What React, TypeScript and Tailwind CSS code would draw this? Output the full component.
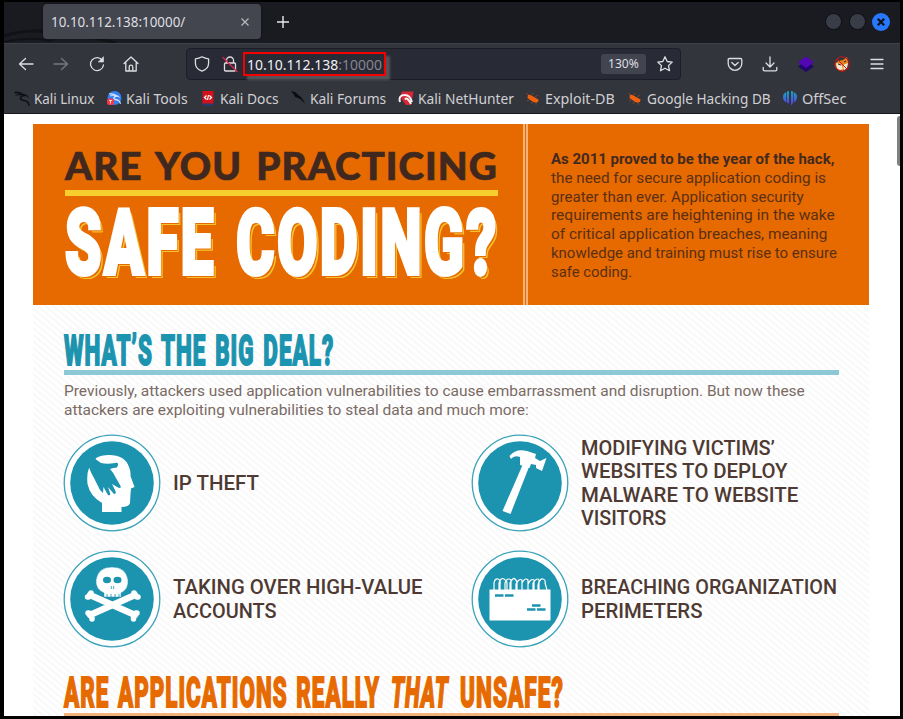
import { useLayoutEffect, useRef, useState, type ReactNode } from "react";

/** One line of lettering, condensed or widened to fill its box. */
function Fit({ className, children }: { className: string; children: ReactNode }) {
  const box = useRef<HTMLDivElement>(null);
  const text = useRef<HTMLSpanElement>(null);
  const [scale, setScale] = useState(1);
  useLayoutEffect(() => {
    if (box.current && text.current) {
      setScale(box.current.clientWidth / text.current.offsetWidth);
    }
  }, []);
  return (
    <div ref={box} className={"shrink-0 whitespace-nowrap " + className}>
      <span ref={text} className="inline-block origin-left" style={{ transform: `scaleX(${scale})` }}>
        {children}
      </span>
    </div>
  );
}

function Stroke({ children, className = "" }: { children: ReactNode; className?: string }) {
  return (
    <svg viewBox="0 0 16 16" fill="none" stroke="#dedee1" strokeWidth="1.3" strokeLinecap="round" strokeLinejoin="round" className={"size-4 shrink-0 " + className}>
      {children}
    </svg>
  );
}

function TabStrip() {
  return (
    <div className="relative flex h-[41px] shrink-0 items-start bg-[#191b20]">
      <svg className="absolute left-0 top-0 h-[41px] w-[220px]" viewBox="0 0 220 41" fill="none" stroke="#101217">
        <path d="M0 34Q22 27 42 30Q85 33 112 41" strokeWidth="3" />
        <path d="M0 40Q25 34 48 39" strokeWidth="2" />
      </svg>
      <div className="relative ml-[39px] mt-[2px] flex h-[35px] w-[218px] items-center rounded-[4px] bg-[#44464f] pl-[8px] shadow-[0_0_2px_#0c0d10]">
        <Fit className="w-[134px] text-[14px] leading-[20px] text-[#dedee2]">10.10.112.138:10000/</Fit>
        <svg viewBox="0 0 8 8" className="ml-[56px] size-2" stroke="#b9babd" strokeWidth="1.2">
          <path d="M.5.5l7 7m0-7l-7 7" />
        </svg>
      </div>
      <svg viewBox="0 0 12 12" className="relative ml-[15.5px] mt-[14px] size-3" stroke="#e8e8ea" strokeWidth="1.4">
        <path d="M6 0v12M0 6h12" />
      </svg>
      <div className="ml-auto mr-[10px] mt-[11px] flex gap-[6.5px]">
        <span className="size-[17px] rounded-full border border-[#0b0d11] bg-[#383d48]" />
        <span className="size-[17px] rounded-full border border-[#0b0d11] bg-[#383d48]" />
        <svg viewBox="0 0 18 18" className="size-[18px]">
          <circle cx="9" cy="9" r="9" fill="#2777ff" />
          <path d="M5.8 5.800l6.400 6.400m0-6.400l-6.400 6.400" stroke="#10131c" strokeWidth="2.300" />
        </svg>
      </div>
    </div>
  );
}

function AddressBar() {
  return (
    <div className="flex h-[32px] w-[495px] items-center rounded-[4px] border border-[#1c1d25] bg-[#282a36]">
      <Stroke className="ml-[7px]">
        <path d="M8 .8Q11 2.600 14.600 2.900V7c0 4-2.600 6.800-6.600 8.200C4 13.800 1.400 11 1.400 7V2.900Q5 2.600 8 .8z" />
      </Stroke>
      <Stroke className="ml-[12px]">
        <path d="M4.500 7V4.500a3.500 3.500 0 0 1 7 0V7M3.500 7h9q1 0 1 1v6q0 1-1 1h-9q-1 0-1-1V8q0-1 1-1z" />
        <path d="M1 1.500l14 14" stroke="#e2254e" />
      </Stroke>
      <div className="ml-[5px] flex h-[24px] w-[143px] items-center border-2 border-[#f50000] pl-[2px] shadow-[4px_4px_2px_#53545a]">
        <Fit className="w-[135px] text-[14.500px] leading-[20px] text-[#f0f0f2]">
          10.10.112.138<span className="text-[#85868e]">:10000</span>
        </Fit>
      </div>
      <div className="ml-auto flex h-[20px] w-[45px] items-center justify-center rounded-[3px] bg-[#42444f]">
        <Fit className="w-[31px] text-[12.500px] leading-[18px] text-[#dedee1]">130%</Fit>
      </div>
      <Stroke className="ml-[11px] mr-[7px]">
        <path d="M8 .8l2.200 4.700 5 .6-3.700 3.500 1 5.100L8 12.200l-4.500 2.500 1-5.100L.8 6.100l5-.6z" />
      </Stroke>
    </div>
  );
}

function Toolbar() {
  return (
    <div className="flex h-[40px] shrink-0 items-center border-t border-[#3f4148] bg-[#33353d] pl-[14px]">
      <Stroke><path d="M15 8H1.500m6-5.500L1.500 8l6 5.500" /></Stroke>
      <Stroke className="ml-[19px] opacity-40"><path d="M1 8h13.500m-6-5.500l6 5.500-6 5.500" /></Stroke>
      <Stroke className="ml-[20px]">
        <path d="M13.500 4.500A6.500 6.500 0 1 0 14.500 9" />
        <path d="M14.500 1v5H9.500z" fill="#dedee1" strokeWidth=".6" />
      </Stroke>
      <Stroke className="ml-[18px] mr-[47px]">
        <path d="M1 7.500L8 1l7 6.500M2.800 6.500V15h10.400V6.500M6.200 15v-4a1.800 1.800 0 0 1 3.600 0v4" />
      </Stroke>
      <AddressBar />
      <Stroke className="ml-[46px]">
        <path d="M2.500 2.500h11q1.300 0 1.300 1.300V7.500a6.800 6.800 0 0 1-13.600 0V3.800q0-1.300 1.300-1.300zM4.800 6.500L8 9.500l3.200-3" />
      </Stroke>
      <Stroke className="ml-[19px]">
        <path d="M8 .8v10M4 7l4 4 4-4M1.200 11.500v2q0 1.300 1.300 1.300h11q1.300 0 1.300-1.300v-2" />
      </Stroke>
      <svg viewBox="0 0 16 16" className="ml-[20px] size-4">
        <path d="M0 10.500L8 5l8 5.500L8 16z" fill="#22056d" />
        <path d="M0 6.300L8 .5l8 5.800-8 5.700z" fill="#5206b4" />
      </svg>
      <svg viewBox="0 0 16 16" className="ml-[20px] size-4">
        <path d="M1 8l3-3 5-1 4-3 1 5-1 5-4 4-5-1-2-3z" fill="#e98020" />
        <path d="M2 7l5 1 2 5-3 1-3-2zM9 9l5-2-1 5-3 2z" fill="#eee7d8" />
        <path d="M4 8l3 1m3-3l2-1" stroke="#35261b" />
        <circle cx="8" cy="8" r="7.200" fill="none" stroke="#ca1616" />
        <path d="M3 3l10 10" stroke="#ca1616" />
      </svg>
      <Stroke className="ml-[19px]"><path d="M2 3.500h12M2 8h12M2 12.500h12" strokeWidth="1.300" /></Stroke>
    </div>
  );
}

const Dragon = ({ color = "#101115" }: { color?: string }) => (
  <g fill="none" stroke={color} strokeLinecap="round">
    <path d="M1 2.500Q6 2 10.500 5.500Q6 6 6.500 9Q8.500 10.500 12 11Q14.500 12 15 15" strokeWidth="1.700" />
    <path d="M2 5Q5 4.200 8 5M10 5q2-.5 4 2" strokeWidth="1.200" />
  </g>
);
const Bug = () => (
  <g>
    <path d="M3 4.500Q6 4.500 9 7l4.500 2.500L13 12Q9 13.500 6 10.500L2.500 8z" fill="#f0600f" />
    <path d="M4 10l-2 1m5 1l-1 2m5-1v2M7 5l1-2m2 4l3-2M3 5L1.500 3" stroke="#8b471f" strokeWidth=".8" />
  </g>
);

const bookmarks = [
  { label: "Kali Linux", box: "w-[92px]", text: "w-[60px]", icon: <Dragon /> },
  {
    label: "Kali Tools", box: "w-[94px]", text: "w-[62px]",
    icon: (
      <>
        <circle cx="8.500" cy="8" r="7" fill="#367ff0" />
        <g transform="translate(3 2) scale(.75)"><Dragon color="#d6e7ff" /></g>
        <rect x="1" y="8.500" width="7" height="6.500" rx="2" fill="#ef3c49" />
        <path d="M3 10.500h3M4.500 10.500v3" stroke="#fbd0d4" />
      </>
    ),
  },
  {
    label: "Kali Docs", box: "w-[90px]", text: "w-[59px]",
    icon: (
      <>
        <path d="M2.500 1h11v14h-11z" fill="#d41119" />
        <path d="M2.500 13.500h11V15.500h-11z" fill="#223c78" />
        <path d="M6.500 5.500L4.500 7.500l2 2M9.500 5.500l2 2-2 2M8.500 5l-1 5" stroke="#fff" strokeWidth="1.200" fill="none" />
      </>
    ),
  },
  {
    label: "Kali Forums", box: "w-[108px]", text: "w-[76px]",
    icon: <path d="M.5 1L5 2l4 3.500q3.500 2 6 8.500-4-5-7-6L5 7 3.500 4z" fill="#0c0d10" />,
  },
  {
    label: "Kali NetHunter", box: "w-[127px]", text: "w-[96px]",
    icon: (
      <>
        <path d="M4 1.500h11.500L13 15H8L2 7z" fill="#d92638" />
        <path d="M2 12Q0 5 7 5q5 0 7 7M7 9.500q1-2 3 0t3 4.500" stroke="#f4f4f4" strokeWidth="2" fill="none" />
      </>
    ),
  },
  { label: "Exploit-DB", box: "w-[102px]", text: "w-[70px]", icon: <Bug /> },
  { label: "Google Hacking DB", box: "w-[155px]", text: "w-[124px]", icon: <Bug /> },
  {
    label: "OffSec", box: "w-[70px]", text: "w-[44px]",
    icon: (
      <>
        <defs>
          <linearGradient id="offsec" x1="0" y1="0" x2="0" y2="1">
            <stop offset="0" stopColor="#13a9c5" />
            <stop offset="1" stopColor="#6136e8" />
          </linearGradient>
        </defs>
        <path d="M7 1v12.500L5 12.800V1.500zM9 1v14.500l2-2.500V1.500zM4.300 2v10.500Q1 10.500 1 7t3.300-5zM11.700 2v10.500Q15 10.500 15 7t-3.300-5z" fill="url(#offsec)" />
      </>
    ),
  },
];

function Bookmarks() {
  return (
    <div className="flex h-[31px] shrink-0 items-center border-b border-[#18191c] bg-[#33353d] pl-[10px]">
      {bookmarks.map((b) => (
        <div key={b.label} className={"flex shrink-0 items-center gap-1 " + b.box}>
          <svg viewBox="0 0 16 16" className="size-4 shrink-0">{b.icon}</svg>
          <Fit className={"-mt-px text-[14.500px] leading-[20px] text-[#d0d0d3] " + b.text}>{b.label}</Fit>
        </div>
      ))}
    </div>
  );
}

function Banner() {
  return (
    <div className="flex h-[181px] w-[836px] bg-[#e66a00] text-[#5a2f14]">
      <div className="w-[490px] pl-[31px] pt-[21px]">
        <Fit className="ml-px h-[45px] w-[433px] font-['Lato'] text-[38.500px] font-black leading-[41px] tracking-[1px] text-[#40281f] [-webkit-text-stroke:.7px_#40281f] [word-spacing:4px]">
          ARE YOU PRACTICING
        </Fit>
        <div className="ml-px h-[6px] w-[433px] bg-[#f6cf2f]" />
        <Fit className="mt-[2px] ml-px h-[90px] w-[434px] font-['Roboto'] text-[91px] font-black leading-[90px] tracking-[4px] text-white [-webkit-text-stroke:4px_white] [text-shadow:3px_3px_0_#e66a00,4px_4px_0_#f6c32b,5px_4px_0_#f6c32b] [word-spacing:5px]">
          SAFE CODING?
        </Fit>
      </div>
      <div className="h-full w-[5px] border-x-2 border-[#f4b27a]" />
      <div className="pl-[23px] pt-[27px] font-['Roboto'] text-[14.500px] leading-[18.750px]">
        <Fit className="w-[283px] font-bold text-[#44291f]">As 2011 proved to be the year of the hack,</Fit>
        <Fit className="w-[275px]">the need for secure application coding is</Fit>
        <Fit className="w-[253px]">greater than ever. Application security</Fit>
        <Fit className="w-[284px]">requirements are heightening in the wake</Fit>
        <Fit className="w-[276px]">of critical application breaches, meaning</Fit>
        <Fit className="w-[286px]">knowledge and training must rise to ensure</Fit>
        <Fit className="w-[81px]">safe coding.</Fit>
      </div>
    </div>
  );
}

function Badge({ children }: { children: ReactNode }) {
  return (
    <svg viewBox="0 0 98 98" className="size-[98px] shrink-0">
      <circle cx="49" cy="49" r="47.800" fill="#fff" stroke="#3ca3ba" strokeWidth="1.300" />
      <circle cx="49" cy="49" r="41.800" fill="#1c93af" />
      {children}
    </svg>
  );
}

const HeadIcon = () => (
  <Badge>
    <path d="M33 24Q38 21 46 21Q62 21 66 33Q68 38 67.500 42L71.500 53L68 54.500L67.500 60L67 69Q66 73 58.500 73V78H39V69Q27 62 24.500 50Q23.500 40 26 34Z" fill="#fff" />
    <path d="M22 34L26 33.500Q28 39 31 44L37 56L40 59L40.500 53L45 61Q48 62 47 59L45 53L51 60Q54 60 52 56L49 50L56 54Q59 54 57 51L53 44Q50 38 47 35Q50 33.500 54 33.500Q57 28 52 29Q44 30.500 38 29L33 25.500L31 22Z" fill="#1c93af" />
  </Badge>
);
const SkullIcon = () => (
  <Badge>
    <g stroke="#fff" strokeWidth="6.500" strokeLinecap="round">
      <path d="M27 45L72 65M72 45L27 65" />
      <path d="M28 43v1M24.500 47h1M71 43v1M74 47h1M26 63h-1M29 68v1M73 63h1M70.500 68v1" strokeWidth="5.500" />
    </g>
    <path d="M41 47V43Q32 39 33 30Q35 17 49 17T65 30Q66 39 58 43V47Z" fill="#fff" stroke="#1c93af" strokeWidth=".5" />
    <ellipse cx="44" cy="30" rx="4" ry="3.200" fill="#1c93af" />
    <ellipse cx="54.500" cy="30" rx="4" ry="3.200" fill="#1c93af" />
    <path d="M48.300 36v3m2.400-3v3M44 44v3m4-3v3m4-3v3m4-3v3" stroke="#1c93af" strokeWidth=".8" />
  </Badge>
);
const HammerIcon = () => (
  <Badge>
    <path d="M52 30L58 33L39.500 80L31.500 77Z" fill="#fff" />
    <path d="M38.500 22Q45 14 56 17L65 20L64 24L69 27L75.500 24L71 37L65 34V31L60 30L58.500 34L49 31V23Q43 21 40 25Z" fill="#fff" />
  </Badge>
);
const FenceIcon = () => (
  <Badge>
    <path d="M18.500 39.500h61v31h-61z" fill="#fff" />
    <path d="M23 40V33q1-5 4-4t2 5v6M28 40v-7q2-6 5-4t3 4v7M34 40v-7q2-6 6-3v10M39 40v-7q3-6 5-4t2 4v7M45 40v-6q3-6 6-4v10M51 40v-7q3-6 6-3v10M57 40v-6q3-6 6-4v10M62 40v-7q4-6 6-3v10M67 40v-5q2-7 5-6t2 4l2 7" fill="none" stroke="#fff" strokeWidth="1.200" />
    <path d="M24 45.500h8.500M34 45.500h8.500M61 55.500h8.500M56 59.500h8.500M66 59.500h8.500" stroke="#1c93af" strokeWidth="2.500" />
  </Badge>
);

function Threats() {
  const label = "flex flex-col pl-[11.500px] pt-[2px] font-['Roboto'] text-[19.500px] font-medium leading-[23.200px] text-[#4e3a32]";
  return (
    <div className="-ml-px mt-[13px] grid grid-cols-[408px_1fr] gap-y-[18px]">
      <div className="flex h-[98px] items-center">
        <HeadIcon />
        <div className={label}><Fit className="w-[86px]">IP THEFT</Fit></div>
      </div>
      <div className="flex h-[98px] items-center">
        <HammerIcon />
        <div className={label}>
          <Fit className="w-[194px]">MODIFYING VICTIMS’</Fit>
          <Fit className="w-[207px]">WEBSITES TO DEPLOY</Fit>
          <Fit className="w-[217px]">MALWARE TO WEBSITE</Fit>
          <Fit className="w-[85px]">VISITORS</Fit>
        </div>
      </div>
      <div className="flex h-[98px] items-center">
        <SkullIcon />
        <div className={label}>
          <Fit className="w-[249px]">TAKING OVER HIGH-VALUE</Fit>
          <Fit className="w-[104px]">ACCOUNTS</Fit>
        </div>
      </div>
      <div className="flex h-[98px] items-center">
        <FenceIcon />
        <div className={label}>
          <Fit className="w-[256px]">BREACHING ORGANIZATION</Fit>
          <Fit className="w-[122px]">PERIMETERS</Fit>
        </div>
      </div>
    </div>
  );
}

function Article() {
  return (
    <div className="flex-1 bg-[repeating-linear-gradient(40deg,#f9f9f9_0px,#f9f9f9_1.500px,#ffffff_2.500px,#ffffff_4.500px,#f9f9f9_5px)] pl-[31px] pt-[22px]">
      <Fit className="h-[43px] w-[270px] font-['Roboto'] text-[43px] font-extrabold leading-[46px] tracking-[2px] text-[#1c93af] [-webkit-text-stroke:2px_#1c93af] [word-spacing:4px]">
        WHAT’S THE BIG DEAL?
      </Fit>
      <div className="h-[5px] w-[775px] bg-[#8cc8d6]" />
      <div className="mt-[8px] font-['Roboto'] text-[14.500px] leading-[18.750px] text-[#7a6a64]">
        <Fit className="w-[741px]">
          Previously, attackers used application vulnerabilities to cause embarrassment and disruption. But now these
        </Fit>
        <Fit className="w-[465px]">attackers are exploiting vulnerabilities to steal data and much more:</Fit>
      </div>
      <Threats />
      <div className="mt-[21px] flex h-[44px] font-['Roboto'] text-[43px] font-extrabold leading-[46px] tracking-[2px] text-[#e66a00] [-webkit-text-stroke:2px_#e66a00] [word-spacing:4px]">
        <Fit className="w-[316px]">ARE APPLICATIONS REALLY</Fit>
        <Fit className="ml-[11px] w-[58px] italic">THAT</Fit>
        <Fit className="ml-[11px] w-[104px]">UNSAFE?</Fit>
      </div>
      <div className="h-[6px] w-[775px] bg-[#f1b27c]" />
    </div>
  );
}

export default function App() {
  return (
    <div className="flex h-[719px] w-[903px] flex-col overflow-hidden border-b-[3px] border-l-4 border-r-[3px] border-t-2 border-black bg-white font-['Noto_Sans',sans-serif]">
      <TabStrip />
      <Toolbar />
      <Bookmarks />
      <div className="flex min-h-0 flex-1 overflow-hidden bg-white pl-[29px] pt-[10px]">
        <div className="flex h-[610px] w-[836px] shrink-0 flex-col">
          <Banner />
          <Article />
        </div>
        <div className="ml-auto -mt-[8px] h-[50px] w-[3px] rounded-l-sm bg-[#7d7f80]" />
      </div>
    </div>
  );
}
